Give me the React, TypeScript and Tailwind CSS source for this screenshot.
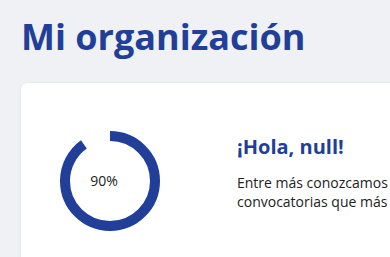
import React from "react";

export default function App() {
  const pct = 90;
  const r = 45;
  const c = 2 * Math.PI * r;
  return (
    <div
      className="h-[257px] w-full overflow-hidden bg-[#f0f1f5] pl-[21px] pt-[17px]"
      style={{ fontFamily: '"Open Sans", sans-serif' }}
    >
      <h1 className="text-4xl font-bold leading-10 text-[#213f98]">Mi organización</h1>
      <div className="mt-[26px] h-[190px] w-[420px] overflow-hidden rounded-md bg-white shadow-[0_0_3px_rgba(0,0,0,0.08)]">
        <div className="flex items-start pl-[39px] pt-[48px]">
          <div className="relative h-[100px] w-[100px] shrink-0">
            <svg width="100" height="100" viewBox="0 0 100 100">
              <circle
                cx="50"
                cy="50"
                r={r}
                fill="none"
                stroke="#213f98"
                strokeWidth="10"
                strokeDasharray={`${(c * pct) / 100} ${c}`}
                transform="rotate(-90 50 50)"
              />
            </svg>
            <div className="absolute inset-0 flex items-center justify-center pr-3 text-sm text-[#222]">
              {pct}%
            </div>
          </div>
          <div className="ml-[77px] mt-[1.5px] w-[160px] shrink-0">
            <h2 className="text-xl font-bold leading-7 text-[#213f98]">¡Hola, null!</h2>
            <p className="mt-[12.5px] text-sm leading-[19px] text-[#222]">
              <span className="block whitespace-nowrap">Entre más conozcamos</span>
              <span className="block whitespace-nowrap">convocatorias que más</span>
            </p>
          </div>
        </div>
      </div>
    </div>
  );
}
